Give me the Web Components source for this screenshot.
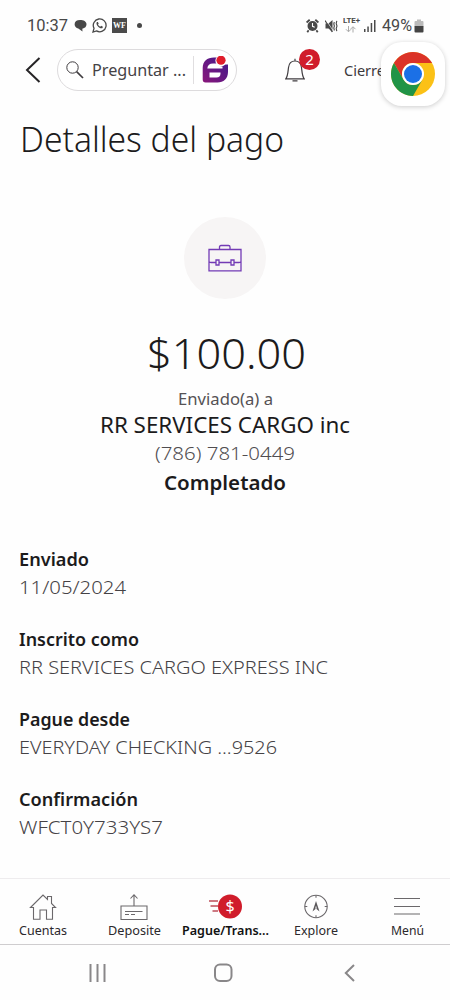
<!DOCTYPE html>
<html lang="es">
<head>
<meta charset="utf-8">
<title>Detalles del pago</title>
<style>
html,body{margin:0;background:#fefefe}
body{width:450px;height:1000px;overflow:hidden;font-family:"Noto Sans","Open Sans",sans-serif;color:#1c1b1c}
</style>
</head>
<body>
<payment-app></payment-app>
<script>
const define=(name,html,init)=>customElements.define(name,class extends HTMLElement{
  constructor(){super();this.attachShadow({mode:'open'}).innerHTML=html;}
  connectedCallback(){if(init)init.call(this,this.shadowRoot);}
});

// Single line of text whose glyphs are widened or narrowed to a given width (w).
define('fit-text',`<style>:host{display:block;white-space:nowrap;flex:none}span{display:inline-block;transform-origin:0 50%}</style><span><slot></slot></span>`,function(r){
  const w=parseFloat(this.getAttribute('w')),s=r.querySelector('span');
  if(!w)return;
  const n=s.getBoundingClientRect().width;
  this.style.width=w+'px';
  s.style.transform='scaleX('+(w/n).toFixed(4)+')';
});

define('status-bar',`<style>
:host{display:flex;height:49px;align-items:center;box-sizing:border-box;padding:2px 26px 0 27px;color:#484848;font-size:16px;line-height:24px}
svg{display:block;flex:none}.sp{flex:1}
.time{font-family:Roboto,sans-serif;margin-right:6px}
.wf{width:15px;height:15px;background:#4b4b4b;color:#fff;font:bold 8px/15px "Liberation Serif",serif;text-align:center;margin:0 10px 0 5px}
.dot{width:5px;height:5px;border-radius:50%;background:#484848}
.lte{width:17px;margin:-1px 4px 0 5px}.lte fit-text{font:bold 7px/8px Roboto,sans-serif}
.lte svg{margin:1px 0 0 1px}
.pct{font-family:Roboto,sans-serif;margin:0 2px 0 6px}
</style>
<fit-text class="time" w="41">10:37</fit-text>
<svg width="13" height="14" viewBox="0 0 13 14"><path d="M6 1C2.700 1 .6 2.600.6 5.200c0 2.200 1.500 3.800 3.700 4.200L8.500 12.500 8.300 9.700C11 9.300 12.500 7.600 12.500 5.300 12.500 2.500 9.600 1 6 1Z" fill="#484848"/></svg>
<svg style="margin-left:5px" width="15" height="15" viewBox="0 0 15 15" fill="none" stroke="#484848"><path d="M1 14l1-3.700a6.400 6.400 0 1 1 2.500 2.600Z" stroke-width="1.300"/><path d="M5 3.900c-2.200 2.200 3 7.500 5.500 6.200l.4-1.400-1.800-.9-.8.9C7.200 8.300 6.500 7.500 6 6.500l.7-.8-.8-1.800Z" fill="#484848" stroke="none"/></svg>
<div class="wf">WF</div><div class="dot"></div><div class="sp"></div>
<svg width="13" height="14" viewBox="0 0 13 14"><circle cx="6.500" cy="7" r="5" fill="#484848"/><path d="M.6 3.500 3.700.8M12.400 3.500 9.300.8M2.600 11.200l-1.300 2M10.400 11.200l1.300 2" stroke="#484848" stroke-width="1.800"/><path d="M6.500 4v3.300l2.200 1" fill="none" stroke="#fff" stroke-width="1.100"/></svg>
<svg style="margin-left:6px" width="13" height="14" viewBox="0 0 13 14"><path d="M.5 4.500h3L7.500 1v12L3.500 9.500h-3Z" fill="#484848"/><path d="M1.200 1.300 8 11.500" stroke="#fff" stroke-width=".7"/><path d="M0 1.500 7.300 13" stroke="#484848" stroke-width="1.200"/><path d="m9.300 3-.5 2 .6 2-.6 2 .6 2.500M11.800 1.800l-.6 2.700.8 2.500-.8 2.500.6 2.700" fill="none" stroke="#484848" stroke-width="1.100"/></svg>
<div class="lte"><fit-text w="17">LTE+</fit-text><svg width="14" height="7" viewBox="0 0 14 7" fill="none" stroke="#aaa"><path d="M4.500 0v5.500M2 3.300l2.500 2.500L7 3.300M9 6.500V1M6.500 3.200 9 .7l2.500 2.500"/></svg></div>
<svg width="12" height="13" viewBox="0 0 12 13" fill="#4b4b4b"><path d="M0 10h1.500v3H0zM3.300 7.500h1.500V13H3.300zM6.700 4h1.500v9H6.700zM10 1h1.500v12H10z"/></svg>
<fit-text class="pct" w="30">49%</fit-text>
<svg width="10" height="14" viewBox="0 0 10 14"><path d="M3 .5h4V2h1.500q1 0 1 1v4.200H.5V3q0-1 1-1H3Z" fill="#bbb"/><path d="M.5 7h9v5.500q0 1-1 1h-7q-1 0-1-1Z" fill="#444"/></svg>`);

define('search-pill',`<style>
:host{display:flex;flex:none;box-sizing:border-box;width:180px;height:42px;border:1px solid #dddbdd;border-radius:21px;align-items:center;padding:0 0 0 8px;color:#454245;background:#fff}
fit-text{font-size:16px;line-height:24px;margin-left:8px}
i{flex:none;width:1px;height:28px;background:#e0dee0;margin:0 8px 0 7px}svg{display:block;flex:none}
</style>
<svg width="18" height="18" viewBox="0 0 18 18" fill="none" stroke="#3f3c3f"><circle cx="6.500" cy="6.500" r="5.700" stroke-width="1"/><path d="m10.600 10.600 6.400 6.400" stroke-width="1.700"/></svg>
<fit-text w="94">Preguntar ...</fit-text><i></i>
<svg width="27" height="28" viewBox="0 0 27 28"><defs><linearGradient id="g" x1="0" y1="1" x2="1" y2="0"><stop stop-color="#8a177a"/><stop offset="1" stop-color="#40198c"/></linearGradient></defs>
<path d="M12 1.500H16.500L21 8.500H26V16C26 22.500 21.500 26.500 15.500 26.500H3.500Q.7 26.500.7 23.500V12C.7 5.500 5 1.500 12 1.500Z" fill="url(#g)"/><path d="M11 7.500H15.500Q17 10.500 20.500 10.500V12.500H5.300Q5.800 7.500 11 7.500ZM7.500 16.500H18.500V17.500Q18.500 21.500 14.500 21.500H7.500Z" fill="#fff"/><circle cx="19" cy="4.700" r="5.600" fill="#fff"/><circle cx="19" cy="4.200" r="4.600" fill="#e01d2b"/></svg>`);

define('chrome-bubble',`<style>
:host{display:flex;width:64px;height:64px;border-radius:21px;background:#fff;box-shadow:0 1px 5px #0003;align-items:center;justify-content:center}
</style><svg width="46" height="46" viewBox="-23 -23 46 46">
<circle r="22" fill="#fbc116"/>
<path d="M-19.050-11A22 22 0 0 1 19.050-11H0A11 11 0 0 0-9.530 5.500Z" fill="#db3328"/>
<path d="M-19.050-11A22 22 0 0 0 0 22L9.530 5.500A11 11 0 0 1-9.530 5.500Z" fill="#219447"/>
<circle r="11" fill="#fff"/><circle r="9" fill="#1b70e6"/></svg>`);

define('alert-bell',`<style>:host{display:block;flex:none;position:relative;width:20px;height:25px}svg{display:block}
b{position:absolute;left:14px;top:-9px;width:21px;height:21px;border-radius:50%;background:#d01c2b;color:#fff;font:400 15px/21px "Noto Sans",sans-serif;text-align:center}</style>
<svg width="20" height="25" viewBox="0 0 20 25" fill="none" stroke="#403d40" stroke-width="1.200"><path d="M.8 20.800H19.200C17 18 17 13 16.500 9.500 16 5.500 13.500 3 10 3S4 5.500 3.500 9.500C3 13 3 18 .8 20.800ZM10 3V.8M7.500 22.800h5"/></svg><b>2</b>`);

define('app-header',`<style>
:host{display:flex;position:relative;height:42px;align-items:center;padding-left:25px;color:#3c393c}
svg{display:block;flex:none;margin-right:16px}alert-bell{margin:0 39px 0 48px}
fit-text{font-size:15px;line-height:22px}
chrome-bubble{position:absolute;left:381px;top:-7px}
</style><svg width="16" height="26" viewBox="0 0 16 26" fill="none" stroke="#262426" stroke-width="2"><path d="M14.500 1 2 13l12.500 12"/></svg>
<search-pill></search-pill><alert-bell></alert-bell><fit-text w="41">Cierre</fit-text><chrome-bubble></chrome-bubble>`);

define('payment-summary',`<style>
:host{display:flex;flex-direction:column;align-items:center}
.ic{width:82px;height:82px;border-radius:50%;background:#f7f5f5;display:flex;align-items:center;justify-content:center;margin-bottom:29px}
.am{font-size:42px;line-height:50px;font-weight:275;margin-bottom:9px;padding-left:2px}
.to{font-size:16px;line-height:24px;color:#555255}
.nm{font-size:21px;line-height:28px;margin-bottom:1px}
.ph{font-size:18px;line-height:26px;font-weight:300;color:#504d50;margin-bottom:2px}
.st{font-size:20px;line-height:30px;font-weight:600}
</style>
<div class="ic"><svg width="34" height="28" viewBox="0 0 34 28" fill="none" stroke="#733bb5" stroke-width="1.300"><path d="M1 5.500H33V26.800H1ZM11.500 5V3Q11.500 1.500 13 1.500H20.500Q22 1.500 22 3V5M1 17.500Q1.500 18.500 3 18.500H8M11 18.500H23M26 18.500H31Q32.500 18.500 33 17.500M8 16h3v5H8ZM23 16h3v5h-3Z"/></svg></div>
<fit-text class="am" w="159">$100.00</fit-text>
<fit-text class="to" w="95">Enviado(a) a</fit-text>
<fit-text class="nm" w="250">RR SERVICES CARGO inc</fit-text>
<fit-text class="ph" w="140">(786) 781-0449</fit-text>
<fit-text class="st" w="122">Completado</fit-text>`);

define('detail-row',`<style>:host{display:block;line-height:28px}
b,div{display:block}b{font-size:18px;font-weight:600}div{font-size:18.500px;font-weight:300;color:#454245}</style>
<b><slot name="label"></slot></b><div><slot></slot></div>`);

define('nav-item',`<style>:host{display:flex;flex-direction:column;align-items:center;font-size:12.500px;line-height:18px;color:#2c292c}
.i{height:28px;display:flex;align-items:center;margin-bottom:1px}</style><div class="i"><slot name="icon"></slot></div><slot></slot>`);

define('bottom-nav',`<style>
:host{display:grid;grid-template-columns:repeat(5,91px);justify-content:center;box-sizing:border-box;height:67px;border-top:1px solid #eeecee;border-bottom:1px solid #cfcdcf;padding-top:14px}
svg{display:block;fill:none;stroke:#6b686b;stroke-width:1.100}.on{font-weight:600;color:#111}
</style>
<nav-item><svg slot="icon" width="28" height="28" viewBox="0 0 28 28"><path d="M1.500 14.500 14 2 18.500 6.500V3.500H22.500V10.500L26.500 14.500H23.500V26.300H17.500V17H11V26.300H4.500V14.500Z"/></svg><fit-text w="48">Cuentas</fit-text></nav-item>
<nav-item><svg slot="icon" width="28" height="28" viewBox="0 0 28 28"><path d="M1 13H27V26.500H1ZM14 13V2M10.500 5.500 14 1.700l3.500 3.800M5 18.500H22.500M5 21.500H9M11 21.500H15"/></svg><fit-text w="53">Deposite</fit-text></nav-item>
<nav-item class="on"><svg slot="icon" width="34" height="28" viewBox="0 0 34 28"><path d="M1 8H10M2.500 13H10M4.500 18H10" style="stroke:#bd4e5a;stroke-width:1.400"/><circle cx="22" cy="13.500" r="12" style="fill:#d01c2b;stroke:none"/><text x="22" y="19" text-anchor="middle" style="fill:#fff;stroke:none;font:400 16px 'Noto Sans',sans-serif">$</text></svg><fit-text w="87">Pague/Trans...</fit-text></nav-item>
<nav-item><svg slot="icon" width="26" height="28" viewBox="0 0 26 28"><circle cx="13" cy="13.500" r="11.200"/><path d="M13 2.300v2.500M13 22.200v2.500M1.800 13.500h2.500M21.700 13.500h2.500"/><path d="M13 8l3.500 10.500-3-2.500V13.500h-1V16l-3 2.500Z" style="fill:#5c595c;stroke:none"/></svg><fit-text w="44">Explore</fit-text></nav-item>
<nav-item><svg slot="icon" width="26" height="28" viewBox="0 0 26 28"><path d="M0 5.500H26M0 13.500H26M0 21H26"/></svg><fit-text w="33">Menú</fit-text></nav-item>`);

define('system-nav',`<style>:host{display:flex;height:55px;align-items:center;box-sizing:border-box;padding-left:89px}
svg{display:block;fill:none;stroke:#898789;stroke-width:2}</style>
<svg width="17" height="18" viewBox="0 0 17 18"><path d="M1.500 0v18M8.500 0v18M15.500 0v18"/></svg>
<svg style="margin-left:108px" width="20" height="20" viewBox="0 0 20 20"><rect x="1" y="1.500" width="16.500" height="16.500" rx="5"/></svg>
<svg style="margin-left:110px" width="11" height="18" viewBox="0 0 11 18"><path d="M10 1 1.800 9 10 17"/></svg>`);

define('payment-app',`<style>
:host{display:flex;flex-direction:column;width:450px;height:1000px}
h1{margin:27px 0 0 20px;font-size:34.500px;line-height:42px;font-weight:275}
payment-summary{margin:57px 0 0 0}
.d{display:flex;flex-direction:column;gap:24px;margin:47px 19px 0}
bottom-nav{margin-top:auto}
</style>
<status-bar></status-bar><app-header></app-header>
<h1><fit-text w="264">Detalles del pago</fit-text></h1>
<payment-summary></payment-summary>
<div class="d">
<detail-row><fit-text slot="label" w="70">Enviado</fit-text><fit-text w="107">11/05/2024</fit-text></detail-row>
<detail-row><fit-text slot="label" w="120">Inscrito como</fit-text><fit-text w="309">RR SERVICES CARGO EXPRESS INC</fit-text></detail-row>
<detail-row><fit-text slot="label" w="111">Pague desde</fit-text><fit-text w="258">EVERYDAY CHECKING ...9526</fit-text></detail-row>
<detail-row><fit-text slot="label" w="119">Confirmación</fit-text><fit-text w="144">WFCT0Y733YS7</fit-text></detail-row>
</div>
<bottom-nav></bottom-nav><system-nav></system-nav>`);
</script>
</body>
</html>
